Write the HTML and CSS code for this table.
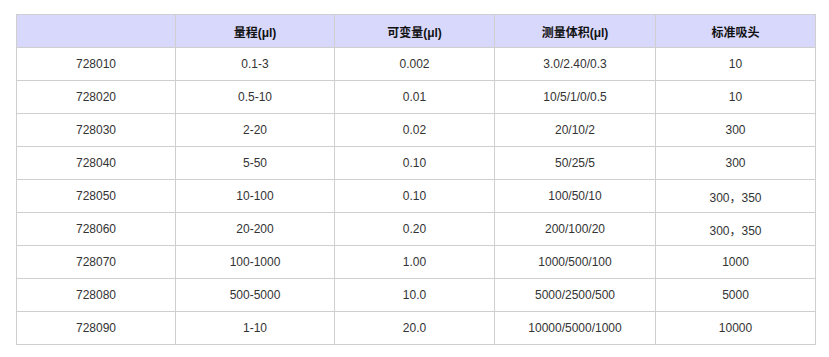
FILE: index.html
```html
<!DOCTYPE html>
<html lang="zh-CN">
<head>
    <meta charset="UTF-8">
    <title>移液器规格</title>
    <link rel="stylesheet" href="styles.css">
</head>
<body>
    <table class="spec-table">
        <colgroup>
            <col class="col-a">
            <col class="col-a">
            <col class="col-b">
            <col class="col-c">
            <col class="col-b">
        </colgroup>
        <thead>
            <tr>
                <th></th>
                <th>量程(μl)</th>
                <th>可变量(μl)</th>
                <th>测量体积(μl)</th>
                <th>标准吸头</th>
            </tr>
        </thead>
        <tbody>
            <tr><td>728010</td><td>0.1-3</td><td>0.002</td><td>3.0/2.40/0.3</td><td>10</td></tr>
            <tr><td>728020</td><td>0.5-10</td><td>0.01</td><td>10/5/1/0/0.5</td><td>10</td></tr>
            <tr><td>728030</td><td>2-20</td><td>0.02</td><td>20/10/2</td><td>300</td></tr>
            <tr><td>728040</td><td>5-50</td><td>0.10</td><td>50/25/5</td><td>300</td></tr>
            <tr><td>728050</td><td>10-100</td><td>0.10</td><td>100/50/10</td><td>300，350</td></tr>
            <tr><td>728060</td><td>20-200</td><td>0.20</td><td>200/100/20</td><td>300，350</td></tr>
            <tr><td>728070</td><td>100-1000</td><td>1.00</td><td>1000/500/100</td><td>1000</td></tr>
            <tr><td>728080</td><td>500-5000</td><td>10.0</td><td>5000/2500/500</td><td>5000</td></tr>
            <tr><td>728090</td><td>1-10</td><td>20.0</td><td>10000/5000/1000</td><td>10000</td></tr>
        </tbody>
    </table>
</body>
</html>
```

FILE: styles.css
```css
* {
    margin: 0;
    padding: 0;
    box-sizing: border-box;
}
body {
    background: #fff;
    padding: 14px 16px;
    font-family: "Liberation Sans", Arial, "Noto Sans CJK SC", sans-serif;
    font-size: 12px;
    color: #333;
}
.spec-table {
    width: 800px;
    border-collapse: collapse;
    table-layout: fixed;
}
.col-a { width: 159px; }
.col-b { width: 160px; }
.col-c { width: 161px; }
.spec-table th,
.spec-table td {
    border: 1px solid #cfcfcf;
    height: 33px;
    text-align: center;
    vertical-align: middle;
}
.spec-table th {
    background: #d8d8fc;
    color: #111;
    font-weight: bold;
    font-size: 12px;
}
```
